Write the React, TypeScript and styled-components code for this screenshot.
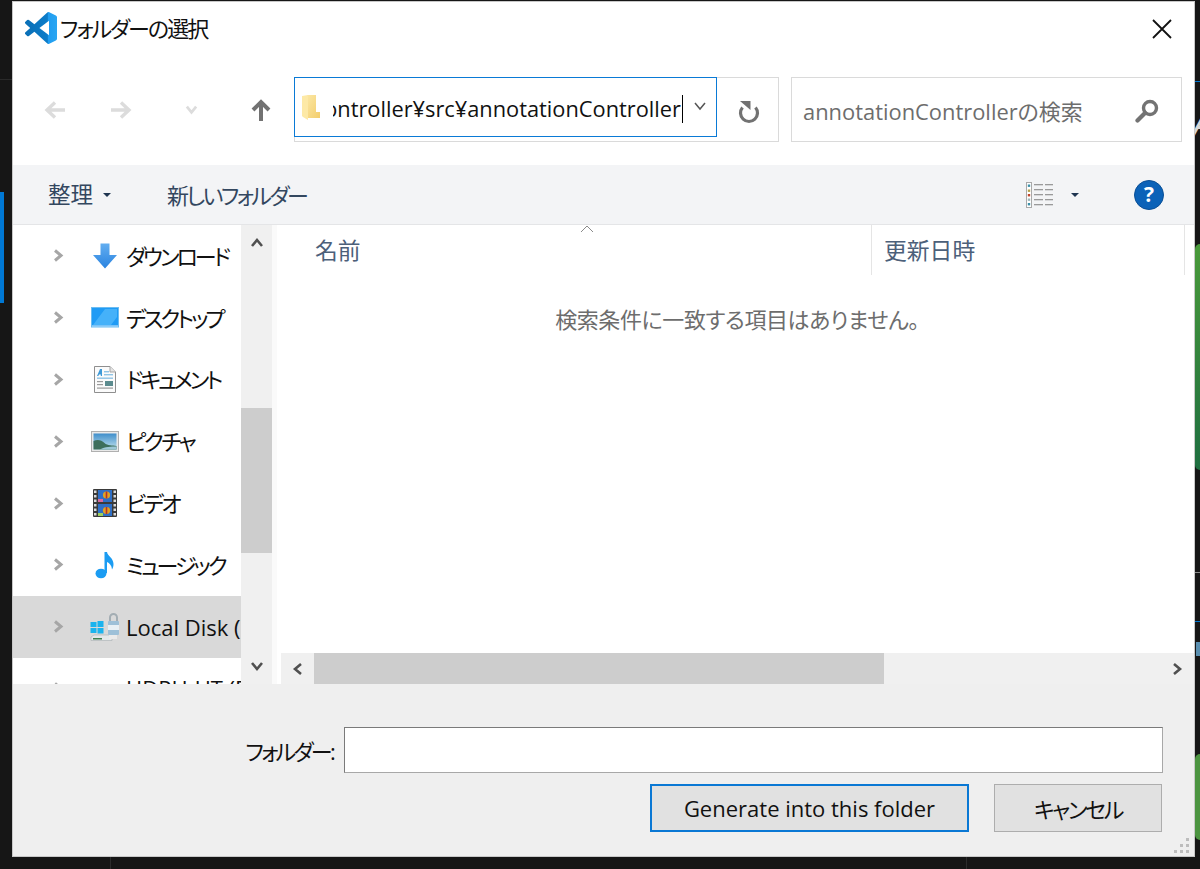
import React from "react";
import styled, { createGlobalStyle } from "styled-components";

const Global = createGlobalStyle`
  html, body { margin: 0; padding: 0; background: #161616; }
  * { box-sizing: border-box; }
`;

const Page = styled.div`
  position: relative;
  width: 1200px;
  height: 869px;
  overflow: hidden;
  background: #161616;
  padding: 2px 6px 13px 13px;
  font-family: "Open Sans", "Noto Sans CJK JP", sans-serif;
  font-feature-settings: "palt";
  font-size: 22px;
  color: #111;
`;

const BackdropMark = styled.div<{ $x: number; $y: number; $w: number; $h: number; $c: string; $r?: string }>`
  position: absolute;
  left: ${(p) => p.$x}px;
  top: ${(p) => p.$y}px;
  width: ${(p) => p.$w}px;
  height: ${(p) => p.$h}px;
  background: ${(p) => p.$c};
  border-radius: ${(p) => p.$r ?? "0"};
`;

const BackdropLetter = styled.span`
  position: absolute;
  left: 1192px;
  top: 100px;
  font-size: 40px;
  line-height: 46px;
  font-style: italic;
  color: #d8d8d8;
`;

const Dialog = styled.div`
  position: relative;
  width: 1181px;
  height: 854px;
  background: #fff;
  display: flex;
  flex-direction: column;
  outline: 1px solid #c8c8c8;
`;

const TitleBar = styled.div`
  height: 75px;
  display: flex;
  align-items: flex-start;
  padding: 10px 22px 0 12px;
`;

const TitleText = styled.span`
  margin-left: 3px;
  line-height: 32px;
  font-size: 22px;
  letter-spacing: -2px;
  flex: 1;
`;

const CloseBtn = styled.div`
  width: 20px;
  height: 20px;
  margin-top: 7px;
  display: flex;
`;

const NavRow = styled.div`
  height: 65px;
  margin-bottom: 23px;
  display: flex;
  padding-left: 9px;
`;

const NavSlot = styled.div<{ $w: number }>`
  width: ${(p) => p.$w}px;
  height: 65px;
  display: flex;
  align-items: center;
  justify-content: center;
`;

const PathGroup = styled.div`
  width: 485px;
  height: 65px;
  border: 1px solid #dadada;
  display: flex;
  align-items: flex-start;
`;

const AddressBox = styled.div`
  width: 423px;
  height: 60px;
  margin: -1px 0 0 -1px;
  border: 1.5px solid #0a7ad6;
  background: #fff;
  display: flex;
  align-items: center;
  padding-left: 7px;
`;

const AddressText = styled.div`
  width: 350px;
  margin: 3px 0 0 12px;
  display: flex;
  justify-content: flex-end;
  overflow: hidden;
  white-space: nowrap;
  line-height: 34px;
  font-size: 21.800px;
`;

const Caret = styled.span`
  display: inline-block;
  flex: none;
  width: 1px;
  height: 28px;
  margin: 3px 0 0 1px;
  background: #000;
`;

const DropSlot = styled.div`
  flex: 1;
  display: flex;
  justify-content: center;
  margin-top: -2px;
`;

const RefreshSlot = styled.div`
  flex: 1;
  height: 63px;
  padding: 6px 0 0 3px;
  display: flex;
  align-items: center;
  justify-content: center;
`;

const SearchBox = styled.div`
  width: 391px;
  height: 65px;
  margin-left: 12px;
  border: 1px solid #dadada;
  display: flex;
  align-items: center;
  padding: 2px 22px 0 11px;
`;

const SearchText = styled.span`
  flex: 1;
  color: #6d6d6d;
  font-size: 21.900px;
`;

const Toolbar = styled.div`
  height: 60px;
  background: #f3f4f6;
  border-bottom: 1px solid #e4e5e7;
  display: flex;
  align-items: center;
  padding-left: 35px;
  color: #33475f;
`;

const ToolLabel = styled.span`
  font-size: 22.500px;
  line-height: 30px;
  margin-top: 0;
`;

const ToolCaret = styled.span<{ $ml: number }>`
  margin-left: ${(p) => p.$ml}px;
  width: 0;
  height: 0;
  border-left: 4px solid transparent;
  border-right: 4px solid transparent;
  border-top: 4px solid #1f3550;
`;

const ToolNew = styled(ToolLabel)`
  margin-left: 56px;
  flex: 1;
  font-size: 22px;
  letter-spacing: -2.500px;
`;

const ViewIconSlot = styled.div`
  display: flex;
  width: 28px;
  height: 26px;
`;

const HelpCircle = styled.div`
  width: 30px;
  height: 30px;
  margin: 0 30px 0 55px;
  border-radius: 50%;
  background: #0b62b8;
  border: 1px solid #0a4f96;
  color: #fff;
  font-size: 21px;
  font-weight: 700;
  line-height: 27px;
  text-align: center;
`;

const Content = styled.div`
  height: 459px;
  display: flex;
`;

const Tree = styled.div`
  width: 228px;
  height: 459px;
  overflow: hidden;
  flex: none;
`;

const TreeRow = styled.div<{ $selected?: boolean }>`
  height: 61.800px;
  display: flex;
  align-items: center;
  padding-left: 38px;
  white-space: nowrap;
  overflow: hidden;
  background: ${(p) => (p.$selected ? "#d9d9d9" : "transparent")};
`;

const RowChevron = styled.div`
  flex: none;
  width: 14px;
  height: 18px;
  display: flex;
  align-items: center;
  justify-content: center;
`;

const IconSlot = styled.div`
  width: 32px;
  height: 32px;
  margin: 0 5px 0 24px;
  flex: none;
  display: flex;
  align-items: center;
  justify-content: center;
`;

const TreeLabel = styled.span<{ $track: number }>`
  font-size: 22px;
  line-height: 30px;
  letter-spacing: ${(p) => p.$track}px;
`;

const VScroll = styled.div`
  width: 31px;
  flex: none;
  background: #f0f0f0;
  display: flex;
  flex-direction: column;
  align-items: center;
`;

const VArrow = styled.div`
  height: 36px;
  display: flex;
  align-items: center;
  justify-content: center;
`;

const VTrack = styled.div`
  flex: 1;
  width: 100%;
  padding-top: 147px;
`;

const VThumb = styled.div`
  height: 145px;
  background: #cdcdcd;
`;

const ListPane = styled.div`
  flex: 1;
  display: flex;
  flex-direction: column;
  border-left: 5px solid #fafafa;
  position: relative;
`;

const Header = styled.div`
  height: 50px;
  display: flex;
  color: #4c607a;
  font-size: 22.800px;
`;

const HeaderCell = styled.div<{ $w: number; $pl: number }>`
  width: ${(p) => p.$w}px;
  padding-left: ${(p) => p.$pl}px;
  border-right: 1px solid #e5e5e5;
  line-height: 52px;
`;

const SortCaret = styled.svg`
  position: absolute;
  left: 303px;
  top: 0;
`;

const Empty = styled.div`
  flex: 1;
  text-align: center;
  padding-top: 26px;
  padding-left: 3px;
  color: #6d6d6d;
  font-size: 22px;
  letter-spacing: -0.400px;
  line-height: 36px;
`;

const HScroll = styled.div`
  height: 31px;
  margin-left: 4px;
  background: #f0f0f0;
  display: flex;
  align-items: center;
`;

const HArrow = styled.div<{ $w: number }>`
  width: ${(p) => p.$w}px;
  display: flex;
  justify-content: center;
`;

const HThumb = styled.div`
  width: 570px;
  height: 31px;
  background: #cdcdcd;
`;

const HSpacer = styled.div`
  flex: 1;
`;

const Footer = styled.div`
  position: relative;
  flex: 1;
  background: #efefef;
  padding: 43px 31px 0 0;
  display: flex;
  flex-direction: column;
  align-items: flex-end;
`;

const FolderRow = styled.div`
  display: flex;
  align-items: center;
`;

const FolderLabel = styled.span`
  margin-right: 11px;
  font-size: 22px;
  letter-spacing: -2.700px;
`;

const FolderInput = styled.div`
  width: 819px;
  height: 46px;
  background: #fff;
  border: 1px solid #a8a8a8;
  border-top-color: #7a7a7a;
  border-left-color: #7a7a7a;
`;

const ButtonRow = styled.div`
  display: flex;
  gap: 25px;
  margin-top: 11px;
  margin-right: 1px;
`;

const Button = styled.div<{ $primary?: boolean; $w: number; $track?: number }>`
  width: ${(p) => p.$w}px;
  height: 48px;
  background: #e1e1e1;
  border: ${(p) => (p.$primary ? "2px solid #0a78d4" : "1px solid #adadad")};
  display: flex;
  align-items: center;
  justify-content: center;
  font-size: 22px;
  letter-spacing: ${(p) => p.$track ?? 0}px;
`;

const Grip = styled.svg`
  position: absolute;
  right: 4px;
  bottom: 2px;
`;

const Chevron = ({ dir, color, size = 14, sw = 3 }: { dir: "r" | "l" | "u" | "d"; color: string; size?: number; sw?: number }) => {
  const pts = {
    r: "4,2 10,7 4,12",
    l: "10,2 4,7 10,12",
    u: "2,10 7,4 12,10",
    d: "2,4 7,10 12,4",
  }[dir];
  return (
    <svg width={size} height={size} viewBox="0 0 14 14">
      <polyline points={pts} fill="none" stroke={color} strokeWidth={sw} />
    </svg>
  );
};

const VSCodeLogo = () => (
  <svg width="32" height="32" viewBox="0 0 24 24">
    <defs>
      <linearGradient id="vsc" x1="0" x2="1" y1="0" y2="0">
        <stop offset="0" stopColor="#0a6fb6" />
        <stop offset="0.7" stopColor="#0c7cc9" />
        <stop offset="0.72" stopColor="#1f9cf0" />
        <stop offset="1" stopColor="#2aa6f2" />
      </linearGradient>
    </defs>
    <path
      fill="url(#vsc)"
      d="M23.15 2.587L18.21.21a1.494 1.494 0 0 0-1.705.29l-9.46 8.63-4.12-3.128a.999.999 0 0 0-1.276.057L.327 7.261A1 1 0 0 0 .326 8.74L3.899 12 .326 15.26a1 1 0 0 0 .001 1.479L1.65 17.94a.999.999 0 0 0 1.276.057l4.12-3.128 9.46 8.63a1.492 1.492 0 0 0 1.704.29l4.942-2.377A1.5 1.5 0 0 0 24 20.06V3.939a1.5 1.5 0 0 0-.85-1.352zm-5.146 14.861L10.826 12l7.178-5.448v10.896z"
    />
  </svg>
);

const ArrowH = ({ flip, color }: { flip?: boolean; color: string }) => (
  <svg width="22" height="20" viewBox="0 0 22 20" style={flip ? { transform: "scaleX(-1)" } : undefined}>
    <path d="M21 10H4M11 2.500L3 10l8 7.500" fill="none" stroke={color} strokeWidth="3.400" />
  </svg>
);

const ArrowUp = () => (
  <svg width="20" height="22" viewBox="0 0 20 22">
    <path d="M10 22V4M2 11l8-8 8 8" fill="none" stroke="#727272" strokeWidth="4" />
  </svg>
);

const FolderIcon = () => (
  <svg width="19" height="26" viewBox="0 0 19 26">
    <defs>
      <linearGradient id="fld" x1="0" x2="1" y1="0" y2="1">
        <stop offset="0" stopColor="#fbe7a4" />
        <stop offset="1" stopColor="#f3cd6c" />
      </linearGradient>
    </defs>
    <path d="M5 1h9v17h4v6H5z" fill="url(#fld)" />
    <path d="M0 2l6-1v25l-5-3-1-1z" fill="#fde9a6" />
  </svg>
);

const Refresh = () => (
  <svg width="24" height="24" viewBox="0 0 24 24">
    <path d="M18.500 6.500A8.500 8.500 0 1 1 5.500 6.500" fill="none" stroke="#727272" strokeWidth="3.200" />
    <path d="M3 0H13.500V9z" fill="#727272" />
  </svg>
);

const SearchIcon = () => (
  <svg width="24" height="24" viewBox="0 0 24 24">
    <circle cx="15" cy="9" r="6.500" fill="none" stroke="#737373" strokeWidth="3.400" />
    <path d="M10 14L2.500 21.500" stroke="#737373" strokeWidth="4.200" strokeLinecap="round" />
  </svg>
);

const ViewIcon = () => (
  <svg width="28" height="26" viewBox="0 0 28 26">
    <rect x="0.500" y="0.500" width="5" height="25" fill="#fff" stroke="#a9a9a9" />
    <rect x="1.800" y="2.500" width="2.400" height="2.400" fill="#3a8fa8" />
    <rect x="1.800" y="7.500" width="2.400" height="2.400" fill="#b5a24a" />
    <rect x="1.800" y="12" width="2.400" height="2.400" fill="#c0452b" />
    <rect x="1.800" y="16.500" width="2.400" height="2.400" fill="#9db6b8" />
    <rect x="1.800" y="21" width="2.400" height="2.400" fill="#3a8fa8" />
    {[2, 7, 12, 17, 22].map((y) => (
      <g key={y} fill="#9a9a9a">
        <rect x="8" y={y} width="9" height="1.300" />
        <rect x="19" y={y} width="8" height="1.300" />
      </g>
    ))}
  </svg>
);

const DownloadIcon = () => (
  <svg width="26" height="26" viewBox="0 0 26 26">
    <defs>
      <linearGradient id="dl" x1="0" x2="0" y1="0" y2="1">
        <stop offset="0" stopColor="#63aef0" />
        <stop offset="1" stopColor="#2a83e0" />
      </linearGradient>
    </defs>
    <path d="M8.500 0.500h9V12H25L13 25.500 1 12h7.500z" fill="url(#dl)" />
  </svg>
);

const DesktopIcon = () => (
  <svg width="28" height="21" viewBox="0 0 28 21">
    <rect x="0.500" y="0.500" width="27" height="19.500" fill="#1f9bf5" stroke="#6bbcf2" />
    <path d="M2 18L14 2h12v8L20 18z" fill="#45b1f9" />
    <rect x="1" y="18.500" width="26" height="1" fill="#d4ecfc" />
  </svg>
);

const DocIcon = () => (
  <svg width="22" height="27" viewBox="0 0 22 27">
    <path d="M0.500 0.500H16L21.500 6V26.500H0.500z" fill="#fbfbfb" stroke="#8f8f8f" />
    <path d="M16 0.500V6h5.500" fill="#e4e4e4" stroke="#a5a5a5" />
    <path d="M3 10l3-7h2v7H6.800V8.400H5L4.400 10z" fill="#3e9ad8" />
    <g fill="#8fc4e6">
      <rect x="10" y="5" width="5" height="1.400" />
      <rect x="10" y="8" width="9" height="1.400" />
      <rect x="3" y="11.500" width="16" height="1.400" />
    </g>
    <rect x="11" y="15" width="8" height="5" fill="#5b8b8e" />
    <g fill="#9a9a9a">
      <rect x="3" y="15" width="6" height="1.200" />
      <rect x="3" y="18" width="6" height="1.200" />
      <rect x="3" y="21.500" width="16" height="1.200" />
    </g>
  </svg>
);

const PictureIcon = () => (
  <svg width="28" height="21" viewBox="0 0 28 21">
    <defs>
      <linearGradient id="sky" x1="0" x2="0" y1="0" y2="1">
        <stop offset="0" stopColor="#3f8ecb" />
        <stop offset="1" stopColor="#c4e4ee" />
      </linearGradient>
    </defs>
    <rect x="0.500" y="0.500" width="27" height="20" fill="#e9e9e9" stroke="#b0b0b0" />
    <rect x="2.500" y="2.500" width="23" height="16" fill="url(#sky)" />
    <path d="M2.500 10c4-2 8-1 11 2s8 2 12 3v3.500h-23z" fill="#3d6f5c" />
    <path d="M9 18.500c5-3 11-3 16.500-3v3z" fill="#9cc7d6" />
  </svg>
);

const VideoIcon = () => (
  <svg width="24" height="28" viewBox="0 0 24 28">
    <rect x="0" y="0" width="24" height="28" fill="#3a3a3a" rx="1" />
    {[1.500, 6, 10.500, 15, 19.500, 24].map((y) => (
      <g key={y} fill="#dcdcdc">
        <rect x="1" y={y} width="2.500" height="2.500" />
        <rect x="20.500" y={y} width="2.500" height="2.500" />
      </g>
    ))}
    <rect x="5" y="1" width="14" height="12" fill="#2f6fc6" />
    <rect x="5" y="15" width="14" height="12" fill="#2f6fc6" />
    <circle cx="13.500" cy="6" r="3.600" fill="#e2a021" />
    <rect x="12.700" y="2.500" width="1.600" height="7" fill="#b3322a" />
    <circle cx="13.500" cy="21.500" r="3.600" fill="#e2a021" />
    <rect x="12.700" y="18" width="1.600" height="7" fill="#b3322a" />
    <rect x="5" y="10" width="5" height="3" fill="#d86aa0" />
    <rect x="5" y="24" width="5" height="3" fill="#9ed05a" />
  </svg>
);

const MusicIcon = () => (
  <svg width="20" height="28" viewBox="0 0 20 28">
    <ellipse cx="6" cy="22.500" rx="5.500" ry="4.800" fill="#1b9cf2" />
    <path d="M9.500 22V1h2.500c0.500 4 6.500 6 6.500 12 0 2-0.500 4-1.500 5.500-0.200-4-2.500-6.500-5-7.500V22z" fill="#1b9cf2" />
  </svg>
);

const DiskIcon = () => (
  <svg width="30" height="28" viewBox="0 0 30 28">
    <g fill="#1bb3ee">
      <rect x="0.500" y="9" width="6" height="5" />
      <rect x="7.500" y="8" width="6" height="6" />
      <rect x="0.500" y="15" width="6" height="5" />
      <rect x="7.500" y="15" width="6" height="5.500" />
    </g>
    <path d="M1 24l3-2h15l3 2v3.500H1z" fill="#e4e8ea" stroke="#a8aeb2" strokeWidth="0.600" />
    <rect x="3" y="25" width="9" height="1.500" fill="#3f7d4f" />
    <rect x="18" y="8" width="11" height="14" rx="1" fill="#9dc0d8" />
    <rect x="18" y="12" width="11" height="5" fill="#e8f0f5" />
    <path d="M20 8V4.500a3.500 3.500 0 0 1 7 0V8" fill="none" stroke="#a3adb3" strokeWidth="2" />
    <rect x="19" y="22" width="8" height="4" fill="#eaeaea" />
  </svg>
);

const rows: { label: string; track: number; icon: React.ReactNode; selected?: boolean }[] = [
  { label: "ダウンロード", track: -3, icon: <DownloadIcon /> },
  { label: "デスクトップ", track: -3, icon: <DesktopIcon /> },
  { label: "ドキュメント", track: -3, icon: <DocIcon /> },
  { label: "ピクチャ", track: -2.500, icon: <PictureIcon /> },
  { label: "ビデオ", track: -2.700, icon: <VideoIcon /> },
  { label: "ミュージック", track: -3, icon: <MusicIcon /> },
  { label: "Local Disk (C:)", track: 0, icon: <DiskIcon />, selected: true },
  { label: "HDPH-UT (D:)", track: 0, icon: null },
];

const marks = [
  { x: 0, y: 192, w: 4, h: 111, c: "#0078d4" },
  { x: 0, y: 79, w: 13, h: 1, c: "#2a2a2a" },
  { x: 1195, y: 81, w: 5, h: 1, c: "#0078d4" },
  { x: 1195, y: 572, w: 5, h: 1, c: "#8a8a8a" },
  { x: 1195, y: 621, w: 5, h: 1, c: "#0078d4" },
  { x: 1196, y: 642, w: 4, h: 14, c: "#5a8fb0" },
  { x: 1195, y: 244, w: 5, h: 226, c: "linear-gradient(#4a9a3a, #1e6e40)", r: "5px 0 0 5px" },
  { x: 1195, y: 754, w: 5, h: 86, c: "#4c9440", r: "5px 0 0 5px" },
  { x: 110, y: 857, w: 1, h: 12, c: "#2c2c2c" },
  { x: 966, y: 857, w: 1, h: 12, c: "#2c2c2c" },
];

export default function App() {
  return (
    <>
      <Global />
      <Page>
        {marks.map((m) => (
          <BackdropMark key={`${m.x}-${m.y}`} $x={m.x} $y={m.y} $w={m.w} $h={m.h} $c={m.c} $r={m.r} />
        ))}
        <BackdropLetter>A</BackdropLetter>
        <Dialog>
          <TitleBar>
            <VSCodeLogo />
            <TitleText>フォルダーの選択</TitleText>
            <CloseBtn>
              <svg width="20" height="20" viewBox="0 0 20 20">
                <path d="M1 1l18 18M19 1L1 19" stroke="#111" strokeWidth="1.800" />
              </svg>
            </CloseBtn>
          </TitleBar>

          <NavRow>
            <NavSlot $w={66}><ArrowH color="#dcdcdc" /></NavSlot>
            <NavSlot $w={66}><ArrowH flip color="#dcdcdc" /></NavSlot>
            <NavSlot $w={74}><Chevron dir="d" color="#dcdcdc" size={13} sw={3} /></NavSlot>
            <NavSlot $w={66}><ArrowUp /></NavSlot>
            <PathGroup>
              <AddressBox>
                <FolderIcon />
                <AddressText>
                  annotationController¥src¥annotationController
                  <Caret />
                </AddressText>
                <DropSlot><Chevron dir="d" color="#555" size={14} sw={1.500} /></DropSlot>
              </AddressBox>
              <RefreshSlot><Refresh /></RefreshSlot>
            </PathGroup>
            <SearchBox>
              <SearchText>annotationControllerの検索</SearchText>
              <SearchIcon />
            </SearchBox>
          </NavRow>

          <Toolbar>
            <ToolLabel>整理</ToolLabel>
            <ToolCaret $ml={10} />
            <ToolNew>新しいフォルダー</ToolNew>
            <ViewIconSlot><ViewIcon /></ViewIconSlot>
            <ToolCaret $ml={17} />
            <HelpCircle>?</HelpCircle>
          </Toolbar>

          <Content>
            <Tree>
              {rows.map((r) => (
                <TreeRow key={r.label} $selected={r.selected}>
                  <RowChevron><Chevron dir="r" color="#a6a6a6" size={17} sw={3} /></RowChevron>
                  <IconSlot>{r.icon}</IconSlot>
                  <TreeLabel $track={r.track}>{r.label}</TreeLabel>
                </TreeRow>
              ))}
            </Tree>
            <VScroll>
              <VArrow><Chevron dir="u" color="#505050" size={14} sw={2.600} /></VArrow>
              <VTrack><VThumb /></VTrack>
              <VArrow><Chevron dir="d" color="#505050" size={14} sw={2.600} /></VArrow>
            </VScroll>
            <ListPane>
              <Header>
                <HeaderCell $w={595} $pl={38}>名前</HeaderCell>
                <HeaderCell $w={313} $pl={12}>更新日時</HeaderCell>
              </Header>
              <SortCaret width="14" height="8" viewBox="0 0 14 8">
                <polyline points="1,7 7,1 13,7" fill="none" stroke="#8a8a8a" strokeWidth="1" />
              </SortCaret>
              <Empty>検索条件に一致する項目はありません。</Empty>
              <HScroll>
                <HArrow $w={33}><Chevron dir="l" color="#505050" size={14} sw={2.600} /></HArrow>
                <HThumb />
                <HSpacer />
                <HArrow $w={34}><Chevron dir="r" color="#505050" size={14} sw={2.600} /></HArrow>
              </HScroll>
            </ListPane>
          </Content>

          <Footer>
            <FolderRow>
              <FolderLabel>フォルダー:</FolderLabel>
              <FolderInput />
            </FolderRow>
            <ButtonRow>
              <Button $primary $w={319}>Generate into this folder</Button>
              <Button $w={168} $track={-2.300}>キャンセル</Button>
            </ButtonRow>
            <Grip width="16" height="16" viewBox="0 0 16 16">
              <g fill="#bdbdbd">
                <rect x="12" y="0" width="3" height="3" />
                <rect x="6" y="6" width="3" height="3" />
                <rect x="12" y="6" width="3" height="3" />
                <rect x="0" y="12" width="3" height="3" />
                <rect x="6" y="12" width="3" height="3" />
                <rect x="12" y="12" width="3" height="3" />
              </g>
            </Grip>
          </Footer>
        </Dialog>
      </Page>
    </>
  );
}
